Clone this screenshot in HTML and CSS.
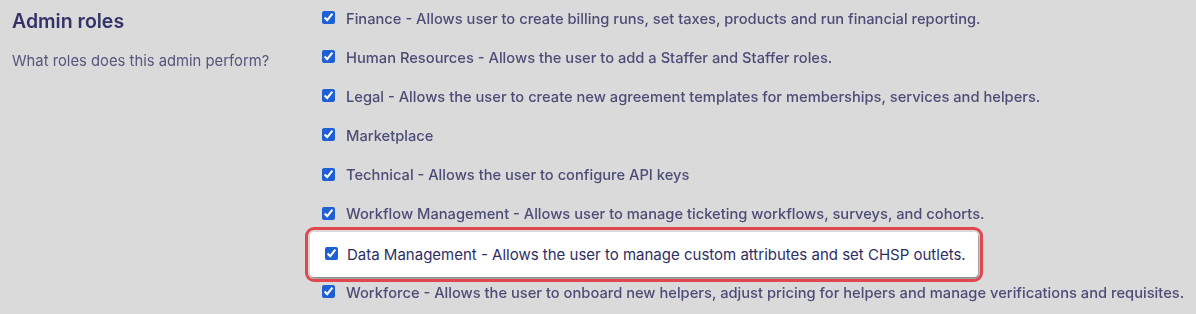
FILE: index.html
```html
<!DOCTYPE html>
<html lang="en">
<head>
  <meta charset="UTF-8" />
  <meta name="viewport" content="width=device-width, initial-scale=1.0" />
  <title>Admin roles</title>
  <link rel="stylesheet" href="styles.css">
</head>
<body>
  <div class="section">
    <div class="intro">
      <h2>Admin roles</h2>
      <p>What roles does this admin perform?</p>
    </div>

    <div class="roles">
      <label class="role"><input type="checkbox" checked /> Finance - Allows user to create billing runs, set taxes, products and run financial reporting.</label>
      <label class="role"><input type="checkbox" checked /> Human Resources - Allows the user to add a Staffer and Staffer roles.</label>
      <label class="role"><input type="checkbox" checked /> Legal - Allows the user to create new agreement templates for memberships, services and helpers.</label>
      <label class="role"><input type="checkbox" checked /> Marketplace</label>
      <label class="role"><input type="checkbox" checked /> Technical - Allows the user to configure API keys</label>
      <label class="role"><input type="checkbox" checked /> Workflow Management - Allows user to manage ticketing workflows, surveys, and cohorts.</label>
      <label class="role focus"><input type="checkbox" checked /> Data Management - Allows the user to manage custom attributes and set CHSP outlets.</label>
      <label class="role"><input type="checkbox" checked /> Workforce - Allows the user to onboard new helpers, adjust pricing for helpers and manage verifications and requisites.</label>
    </div>
  </div>
</body>
</html>
```

FILE: styles.css
```css
body {
  margin: 0;
  background: #dadada;
  font-family: Inter, 'Noto Sans', sans-serif;
  color: #3a3a68;
  overflow: hidden;
}
.section {
  display: flex;
  padding-left: 12px;
}
.intro {
  width: 310px;
  flex-shrink: 0;
  filter: blur(0.5px);
}
.intro h2 {
  margin: 9px 0 0;
  font-size: 19.5px;
  font-weight: 600;
  color: #33336a;
}
.intro p {
  margin: 19px 0 0;
  font-size: 14.8px;
  color: #55557e;
}
.roles {
  display: flex;
  flex-direction: column;
  margin-top: -1px;
}
.role {
  display: flex;
  align-items: center;
  height: 39.15px;
  font-size: 14.7px;
  font-weight: 500;
  color: #4c4c78;
  white-space: nowrap;
  filter: blur(0.55px);
}
.role input {
  width: 13px;
  height: 13px;
  margin: -2px 11px 0 0;
  accent-color: #1f5fd6;
}
.focus {
  margin-left: -12px;
  padding-left: 15px;
  width: 653px;
  height: 45px;
  margin-top: -1.5px;
  margin-bottom: -4.35px;
  font-size: 15px;
  font-weight: 400;
  color: #2e2e66;
  background: #fff;
  border-radius: 4px;
  box-shadow: 1px 2px 2px rgba(0,0,0,0.35);
  outline: 3.5px solid #e2464f;
  outline-offset: 2px;
  filter: none;
}
.focus input {
  margin-right: 9px;
}
```
